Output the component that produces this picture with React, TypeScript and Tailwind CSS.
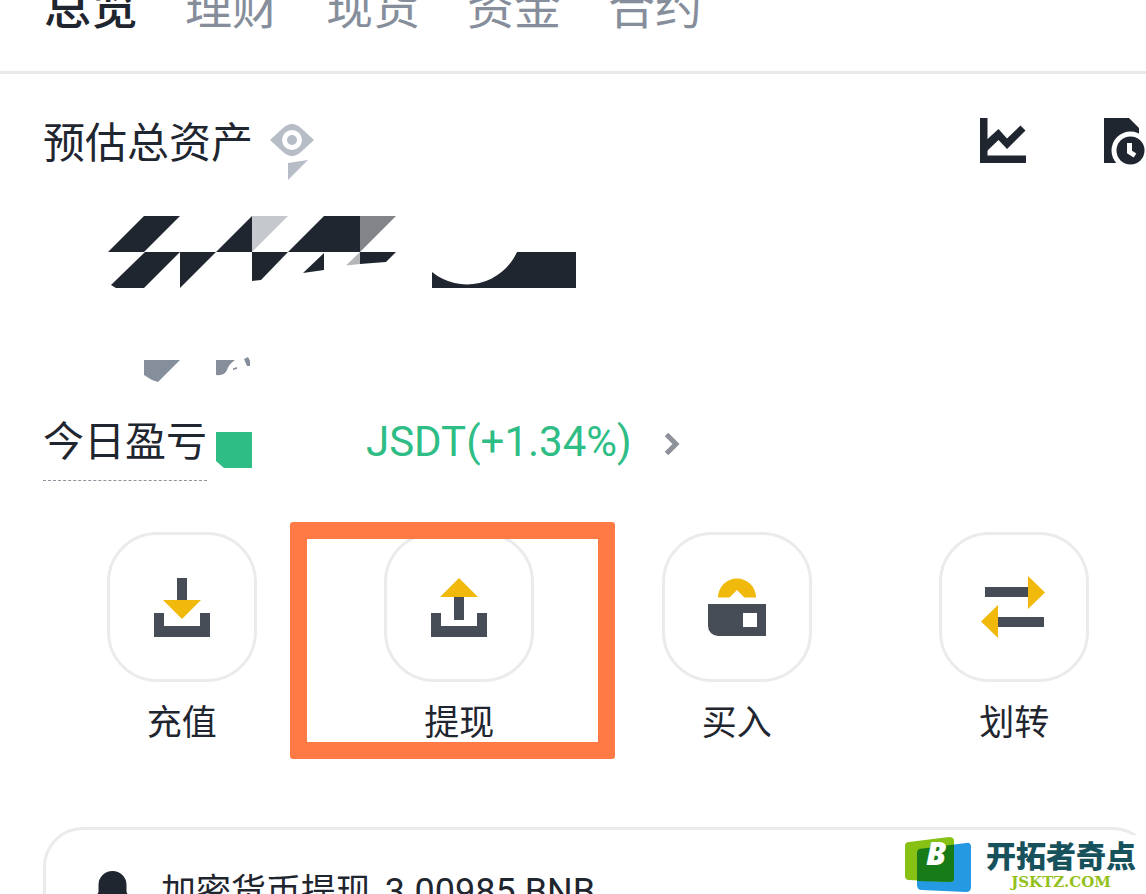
import type { ReactNode } from "react";

const tabs = ["总览", "理财", "现货", "资金", "合约"];

const TRAY = "M-28 6h10v13h36V6h10v24h-56z";

type Action = {
  label: string;
  icon: ReactNode;
  highlighted?: boolean;
};

const actions: Action[] = [
  {
    label: "充值",
    icon: (
      <>
        <path d={TRAY} />
        <path d="M-5-29H5v22H-5z" />
        <path d="M-19-7h38L0 12z" className="fill-[#f0b90b]" />
      </>
    ),
  },
  {
    label: "提现",
    highlighted: true,
    icon: (
      <>
        <path d={TRAY} />
        <path d="M-5-10H5v23H-5z" />
        <path d="M-19-10h38L0-29z" className="fill-[#f0b90b]" />
      </>
    ),
  },
  {
    label: "买入",
    icon: (
      <>
        <path d="M-29-3h58v32h-48a10 10 0 0 1-10-10zM6 6v14h14V6z" fillRule="evenodd" />
        <path d="M-19-9.5a19 19 0 0 1 38 0H7.5L0-17l-7.500 7.500z" className="fill-[#f0b90b]" />
      </>
    ),
  },
  {
    label: "划转",
    icon: (
      <>
        <path d="M-29-20h43v10h-43zM-16 10h46v10h-46z" />
        <path d="M14-31l17 16.500L14 2zM-16-2l-17 16.500L-16 31z" className="fill-[#f0b90b]" />
      </>
    ),
  },
];

function EyeIcon() {
  return (
    <svg viewBox="0 0 44 32" className="h-8 w-11 overflow-visible fill-[#b7bdc6]">
      <path d="M0 16 13 4q9-8 18 0l13 12-13 12q-9 8-18 0z" />
      <circle cx="22" cy="16" r="10" className="fill-white" />
      <circle cx="22" cy="16" r="5" />
      <path d="M18 39 38 36 18 56z" />
    </svg>
  );
}

function ChartIcon() {
  return (
    <svg viewBox="0 0 46 45" className="h-[45px] w-[46px] fill-[#1f2630]">
      <path d="M0 0h7.500v37.500H46V45H0z" />
      <path d="M7 21.500 18.500 11 27 20.500 40.500 7.500l5 5L27 31l-8.500-9L7 33z" />
    </svg>
  );
}

function HistoryIcon() {
  return (
    <svg viewBox="0 0 40 45" className="h-[45px] w-10 overflow-visible fill-[#1f2630]">
      <path d="M0 0h25l10 10v35H0z" />
      <circle cx="26.500" cy="32.500" r="19" className="fill-white" />
      <circle cx="26.500" cy="32.500" r="14" />
      <path d="M25.500 25v9l5.500 3.500" className="fill-none stroke-white stroke-[5]" />
    </svg>
  );
}

// Hidden balance, only slivers of the digits stay visible
function MaskedBalance() {
  return (
    <svg viewBox="108 216 468 72" className="ml-[65px] mt-[52px] h-[72px] w-[468px] fill-[#1f2630]">
      <path d="M144 216h36l-36 36h-36z" />
      <path d="M145 252h35l-36 36h-28l-5-3z" />
      <path d="M180 252h36l-36 36z" />
      <path d="M252 216v36h-36z" />
      <path d="M252 216h36l-36 36z" className="fill-[#c5c8cc]" />
      <path d="M252 252h36l-27 28-9 1z" />
      <path d="M324 216h36v36h-72z" />
      <path d="M360 216h36l-36 36z" className="fill-[#828489]" />
      <path d="M324 253v17l-21 3z" />
      <path d="M360 252v12l-14 1.500z" className="fill-[#b5b6b9]" />
      <path d="M360 252h36l-10 10-26 2z" />
      <path d="M432 272a55 55 0 0 0 85-20h59v36H432z" />
    </svg>
  );
}

function MaskedFiat() {
  return (
    <svg viewBox="144 357 107 26" className="ml-[101px] mt-[69px] h-[26px] w-[107px] fill-[#868e9b]">
      <path d="M144 360h36l-22 22-6-2-8-5z" />
      <path d="M216 360h19q-6 4-8 10t-11 5z" />
      <path d="M233 368.500l4-1.500v2l-4 1z" />
      <path d="M244 359l4-2 2 4v5h-3z" />
    </svg>
  );
}

function ActionButton({ label, icon, highlighted }: Action) {
  return (
    <div className="relative flex justify-center">
      <button type="button" className="flex flex-col items-center gap-5">
        <span className="flex size-[150px] items-center justify-center rounded-[50px] border-[3px] border-[#ebebed]">
          <svg viewBox="-34 -34 68 68" className="size-[68px] fill-[#474d57]">
            {icon}
          </svg>
        </span>
        <span className="text-[35px] leading-[35px]">{label}</span>
      </button>
      {highlighted && (
        <div className="pointer-events-none absolute -bottom-[22px] -left-[31px] -right-[17px] -top-[10px] rounded-[3px] border-[17px] border-[#ff7a45]" />
      )}
    </div>
  );
}

function Watermark() {
  return (
    <div className="absolute bottom-0 right-0 flex h-[59px] items-start gap-[14px] bg-white pr-[10px]">
      <svg viewBox="0 0 67 56" className="mt-px h-14 w-[67px]">
        <path d="M14 13 61 7q5-1 5 4v40q0 5-5 5l-44-2q-5 0-5-5V17q0-3 2-4z" className="fill-[#2699e3]" />
        <path d="M4 6 44 1q5 0 5 4v38q0 3-4 3L4 44q-4 0-4-4V10q0-4 4-4z" className="fill-[#86c113]" />
        <path d="M14 13 49 8.500V43q0 3-4 3l-33-1V17q0-3 2-4z" className="fill-[#177b17]" />
        <text
          x="21"
          y="29"
          className="fill-white font-['Open_Sans',sans-serif] text-[32px] font-extrabold italic"
        >
          B
        </text>
      </svg>
      <div className="flex flex-col items-center gap-1 pt-1">
        <span className="text-[30px] font-black leading-[30px] text-[#17525c]">开拓者奇点</span>
        <span className="font-['DejaVu_Serif',serif] text-[15px] font-bold leading-[18px] text-[#93c11c]">
          JSKTZ.COM
        </span>
      </div>
    </div>
  );
}

export default function App() {
  return (
    <div className="relative h-screen overflow-hidden bg-white font-['Noto_Sans_CJK_SC',sans-serif] text-[#1f2630]">
      <header className="flex h-[74px] items-start border-b-[3px] border-[#e9e9ea] pl-11">
        <nav className="-mt-5 flex gap-[47px] text-[47px] leading-[47px]">
          {tabs.map((tab, i) => (
            <button
              key={tab}
              type="button"
              className={i === 0 ? "font-medium" : "text-[#868e9b]"}
            >
              {tab}
            </button>
          ))}
        </nav>
      </header>

      <main className="-mr-[7px] pl-[43px] pt-[42px]">
        <div className="flex h-12 items-center pr-[9px]">
          <h1 className="text-[42px] leading-[42px]">预估总资产</h1>
          <button type="button" aria-label="隐藏资产" className="ml-[17px]">
            <EyeIcon />
          </button>
          <div className="ml-auto flex gap-[78px]">
            <button type="button" aria-label="走势">
              <ChartIcon />
            </button>
            <button type="button" aria-label="历史记录">
              <HistoryIcon />
            </button>
          </div>
        </div>

        <MaskedBalance />
        <MaskedFiat />

        <div className="mt-[37px] flex h-[61px] items-start">
          <button
            type="button"
            className="h-[61px] border-b border-dashed border-[#8f949c] pb-6 text-[41px] leading-[36px]"
          >
            今日盈亏
          </button>
          <svg viewBox="0 0 36 36" className="ml-[9px] mt-3 size-9 fill-[#2ebd85]">
            <path d="M0 0h36v36H8l-8-7z" />
          </svg>
          <a href="#pnl" className="ml-[114px] flex items-center gap-8 text-[#2ebd85]">
            <span className="font-[Roboto,sans-serif] text-[42px] leading-[44px]">JSDT(+1.34%)</span>
            <svg viewBox="0 0 16 24" className="mt-1 h-6 w-4">
              <path d="M2.500 2.500 12 12l-9.500 9.500" className="fill-none stroke-[#8d9199] stroke-[5]" />
            </svg>
          </a>
        </div>

        <div className="mt-[51px] grid grid-cols-4">
          {actions.map((action) => (
            <ActionButton key={action.label} {...action} />
          ))}
        </div>

        <a
          href="#notice"
          className="mt-[90px] flex items-start gap-8 rounded-[40px] border-[3px] border-[#ebebed] pb-10 pl-[50px] pt-[41px]"
        >
          <svg viewBox="0 0 33 40" className="h-10 w-[33px] fill-[#1f2630]">
            <path d="M2.500 14a14 14 0 0 1 28 0v7l2.500 5v6H0v-6l2.500-5zM10 35h13l-4 5h-5z" />
          </svg>
          <span className="text-[35px] leading-[36px]">
            加密货币提现 <span className="ml-1.5 font-[Roboto,sans-serif] text-[36px]">3.00985 BNB</span>
          </span>
        </a>
      </main>

      <Watermark />
    </div>
  );
}
